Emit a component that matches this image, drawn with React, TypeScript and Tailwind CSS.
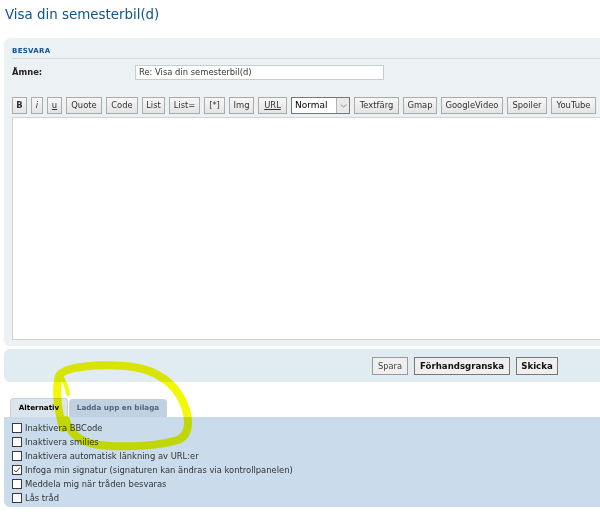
import type { ReactNode } from "react";

const font = "font-['DejaVu_Sans','Liberation_Sans',sans-serif]";

type Tool = { label: ReactNode; w: string };

const tools: Tool[] = [
  { label: <b>B</b>, w: "w-[15px]" },
  { label: <i>i</i>, w: "w-[12px]" },
  { label: <u>u</u>, w: "w-[15px]" },
  { label: "Quote", w: "w-[36px]" },
  { label: "Code", w: "w-[32px]" },
  { label: "List", w: "w-[23px]" },
  { label: "List=", w: "w-[31px]" },
  { label: "[*]", w: "w-[21px]" },
  { label: "Img", w: "w-[25px]" },
  { label: <u>URL</u>, w: "w-[29px]" },
];

const tools2: Tool[] = [
  { label: "Textfärg", w: "w-[45px]" },
  { label: "Gmap", w: "w-[34px]" },
  { label: "GoogleVideo", w: "w-[62px]" },
  { label: "Spoiler", w: "w-[40px]" },
  { label: "YouTube", w: "w-[45px]" },
];

const options = [
  { text: "Inaktivera BBCode", checked: false },
  { text: "Inaktivera smilies", checked: false },
  { text: "Inaktivera automatisk länkning av URL:er", checked: false },
  { text: "Infoga min signatur (signaturen kan ändras via kontrollpanelen)", checked: true },
  { text: "Meddela mig när tråden besvaras", checked: false },
  { text: "Lås tråd", checked: false },
];

function ToolButton({ tool }: { tool: Tool }) {
  return (
    <span
      className={`${tool.w} flex h-[17px] shrink-0 items-center justify-center border border-[#ababab] bg-gradient-to-b from-[#f7f7f7] to-[#e4e4e4] text-[8.4px] text-[#333]`}
    >
      {tool.label}
    </span>
  );
}

function Checkbox({ checked }: { checked: boolean }) {
  return (
    <span className="flex h-[10px] w-[10px] shrink-0 items-center justify-center border border-[#3a3a3a] bg-white">
      {checked && (
        <svg viewBox="0 0 10 10" className="h-[8px] w-[8px]" aria-hidden="true">
          <polyline points="1.5,5 4,7.5 8.5,2" fill="none" stroke="#333" strokeWidth="1.2" />
        </svg>
      )}
    </span>
  );
}

export default function App() {
  return (
    <div className={`relative h-[524px] w-[600px] overflow-hidden bg-white ${font}`}>
      <h2 className="pl-[5px] pt-[7px] text-[13.4px] leading-[16px] text-[#105289]">Visa din semesterbil(d)</h2>

      {/* reply panel */}
      <div className="-mr-[10px] ml-[4px] mt-[15px] rounded-l-[6px] bg-[#ECF1F3] pb-[6px] pl-[8px] pt-[8px]">
        <div className="mr-[10px] border-b border-[#d3d9de] pb-[2px] text-[7px] font-bold leading-[10px] tracking-[0.3px] text-[#115098]">
          BESVARA
        </div>
        <div className="mt-[6px] flex items-start">
          <span className="w-[123px] text-[8.4px] font-bold leading-[15px] text-[#222]">Ämne:</span>
          <div className="flex h-[15px] w-[249px] items-center border border-[#c9cdd1] bg-white pl-[3px] text-[8.4px] text-[#333]">
            Re: Visa din semesterbil(d)
          </div>
        </div>

        <div className="mt-[17px] flex gap-[4px]">
          {tools.map((t, i) => (
            <ToolButton key={i} tool={t} />
          ))}
          <span className="flex h-[17px] w-[59px] shrink-0 items-center border border-[#767676] bg-white pl-[3px] text-[9px] text-black">
            <span className="flex-1">Normal</span>
            <span className="flex h-full w-[13px] items-center justify-center border-l border-[#b5b5b5] bg-[#e9e9e9]">
              <svg viewBox="0 0 8 5" className="h-[4px] w-[7px]" aria-hidden="true">
                <polyline points="0.5,0.5 4,4 7.5,0.5" fill="none" stroke="#777" strokeWidth="1" />
              </svg>
            </span>
          </span>
          {tools2.map((t, i) => (
            <ToolButton key={i} tool={t} />
          ))}
        </div>

        <div className="mt-[3px] h-[223px] border border-[#cdd3d8] bg-white" />
      </div>

      {/* submit buttons */}
      <div className="-mr-[10px] ml-[4px] mt-[3px] flex h-[33px] gap-[6px] rounded-l-[6px] bg-[#E1EBF2] pl-[368px] pt-[8px]">
        <span className="flex h-[18px] w-[36px] items-center justify-center border border-[#9a9a9a] bg-[#efefef] text-[8.3px] text-[#444]">
          Spara
        </span>
        <span className="flex h-[18px] w-[96px] items-center justify-center border border-[#777] bg-[#efefef] text-[8.6px] font-bold text-[#111]">
          Förhandsgranska
        </span>
        <span className="flex h-[18px] w-[42px] items-center justify-center border border-[#777] bg-[#efefef] text-[8.6px] font-bold text-[#111]">
          Skicka
        </span>
      </div>

      {/* tabs */}
      <div className="ml-[10px] mt-[16px] flex items-end gap-[1px]">
        <span className="flex h-[19px] w-[58px] items-center justify-center rounded-t-[4px] border border-b-0 border-[#c5d2de] bg-[#dce4ec] text-[7.2px] font-bold text-black">
          Alternativ
        </span>
        <span className="flex h-[18px] w-[98px] items-center justify-center rounded-t-[4px] bg-[#c2d1df] text-[7.2px] font-bold text-[#536482]">
          Ladda upp en bilaga
        </span>
      </div>

      {/* options panel */}
      <div className="-mr-[10px] ml-[4px] flex h-[90px] flex-col rounded-bl-[6px] bg-[#cadceb] pl-[8px] pt-[4px]">
        {options.map((o) => (
          <label key={o.text} className="flex h-[14px] items-center gap-[3px] text-[8.4px] text-[#333]">
            <Checkbox checked={o.checked} />
            <span>{o.text}</span>
          </label>
        ))}
      </div>

      {/* hand drawn highlight */}
      <svg
        className="pointer-events-none absolute left-0 top-0 mix-blend-multiply"
        width="600"
        height="524"
        viewBox="0 0 600 524"
        aria-hidden="true"
      >
        <path
          d="M 63 428 C 58 410, 55 390, 59 376 C 64 366, 100 364, 125 366 C 152 368, 170 380, 180 396 C 190 414, 192 434, 178 440 C 155 447, 115 448, 93 444 C 77 440, 69 431, 66 420"
          fill="none"
          stroke="#f4f806"
          strokeWidth="8"
          strokeLinecap="round"
        />
        <path d="M 61 376 C 65 382, 67 388, 68 394" fill="none" stroke="#f4f806" strokeWidth="4" strokeLinecap="round" />
      </svg>
    </div>
  );
}
